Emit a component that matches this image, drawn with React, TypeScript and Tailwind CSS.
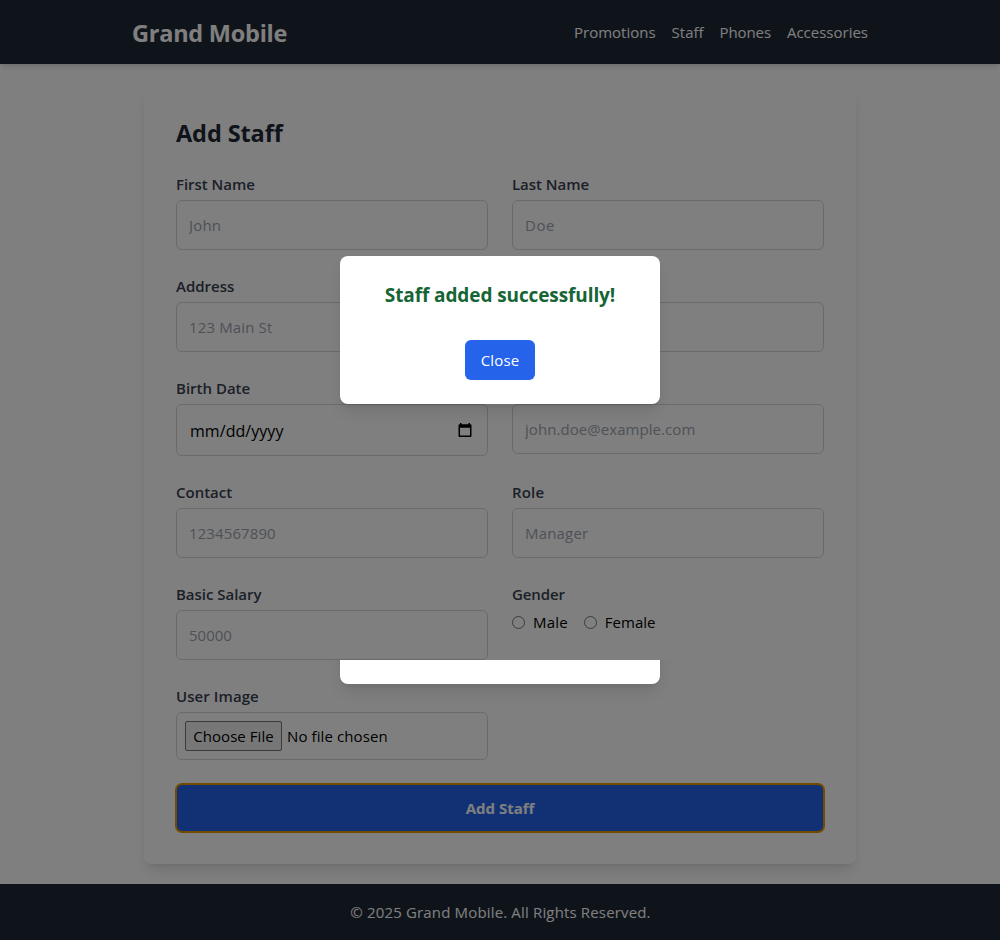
import type { ReactNode } from 'react';

type FieldProps = { label?: string; labelTracking?: string; children: ReactNode };

const control =
  'mt-1 block w-full rounded-md border border-[#d1d5db] bg-white text-[15px] leading-6 text-black';

function Field({ label, labelTracking = '', children }: FieldProps) {
  return (
    <div>
      <div className={`h-6 text-[15px] leading-6 font-semibold text-[#374151] ${labelTracking}`}>{label}</div>
      {children}
    </div>
  );
}

function TextInput({ placeholder, tracking = '', type = 'text' }: { placeholder?: string; tracking?: string; type?: string }) {
  return (
    <input
      type={type}
      placeholder={placeholder}
      className={`${control} h-[50px] p-3 placeholder:text-[#9ca3af] placeholder:opacity-100 ${tracking}`}
    />
  );
}

function DateInput() {
  return (
    <div className={`${control} flex h-[52px] items-center justify-between pr-[15px] pl-[13px]`}>
      <span className="pt-px text-base tracking-[0.05px]">mm/dd/yyyy</span>
      <svg width="14" height="15" viewBox="0 0 14 15" aria-hidden="true">
        <path
          fill="#000"
          fillRule="evenodd"
          d="M2 0h1.500v1.200h7V0H12v1.200h.5q1 0 1 1v10.800q0 1-1 1h-11q-1 0-1-1V2.200q0-1 1-1H2zM2 4.800v7.700h10V4.800z"
        />
      </svg>
    </div>
  );
}

function FileInput() {
  return (
    <div className={`${control} flex h-12 items-center px-2`}>
      <button className="h-[30px] w-[97px] rounded-[2px] border border-[#767676] bg-[#efefef] text-[15px] leading-6 tracking-[0.07px] whitespace-nowrap">
        Choose File
      </button>
      <span className="ml-[5px] tracking-[0.1px]">No file chosen</span>
    </div>
  );
}

function Radio({ label, tracking }: { label: string; tracking: string }) {
  return (
    <label className="flex h-6 items-center text-[15px] text-black">
      <input type="radio" name="gender" className="mr-2 size-[13px]" />
      <span className={tracking}>{label}</span>
    </label>
  );
}

function Header() {
  return (
    <header className="h-16 bg-[#1f2937] text-white shadow-[0_4px_6px_-1px_rgba(0,0,0,0.1),0_2px_4px_-2px_rgba(0,0,0,0.1)]">
      <div className="mx-auto flex h-16 w-[736px] items-center justify-between">
        <h1 className="pt-px text-[23.5px] leading-8 font-bold tracking-[-0.25px]">Grand Mobile</h1>
        <nav className="flex gap-4 text-[15px] leading-6">
          <a>Promotions</a>
          <a>Staff</a>
          <a className="tracking-[-0.12px]">Phones</a>
          <a>Accessories</a>
        </nav>
      </div>
    </header>
  );
}

function StaffForm() {
  return (
    <section className="mx-auto h-[780px] w-[712px] rounded-lg bg-white p-8 shadow-[0_10px_15px_-3px_rgba(0,0,0,0.1),0_4px_6px_-4px_rgba(0,0,0,0.1)]">
      <h2 className="mb-6 pt-[2px] text-[23.5px] leading-[30px] font-bold tracking-[-0.1px] text-[#1f2937]">Add Staff</h2>
      <div className="grid grid-cols-2 gap-6">
        <Field label="First Name" labelTracking="tracking-[-0.03px]">
          <TextInput placeholder="John" tracking="tracking-[0.2px]" />
        </Field>
        <Field label="Last Name" labelTracking="tracking-[-0.03px]">
          <TextInput placeholder="Doe" tracking="tracking-[0.5px]" />
        </Field>
        <Field label="Address">
          <TextInput placeholder="123 Main St" tracking="tracking-[0.14px]" />
        </Field>
        <Field>
          <TextInput />
        </Field>
        <Field label="Birth Date">
          <DateInput />
        </Field>
        <Field>
          <TextInput type="email" placeholder="john.doe@example.com" tracking="tracking-[0.06px]" />
        </Field>
        <Field label="Contact">
          <TextInput placeholder="1234567890" tracking="tracking-[0.1px]" />
        </Field>
        <Field label="Role" labelTracking="tracking-[0.19px]">
          <TextInput placeholder="Manager" tracking="tracking-[0.18px]" />
        </Field>
        <Field label="Basic Salary" labelTracking="tracking-[-0.02px]">
          <TextInput placeholder="50000" />
        </Field>
        <Field label="Gender" labelTracking="tracking-[-0.1px]">
          <div className="mt-1 flex gap-4">
            <Radio label="Male" tracking="tracking-[0.2px]" />
            <Radio label="Female" tracking="tracking-[0px]" />
          </div>
        </Field>
        <Field label="User Image" labelTracking="tracking-[0.08px]">
          <FileInput />
        </Field>
        <button className="col-span-2 h-12 rounded-md bg-[#2563eb] text-[15px] leading-6 font-bold text-white outline-2 -outline-offset-1 outline-[#e59700]">
          Add Staff
        </button>
      </div>
    </section>
  );
}

const dialogShadow = 'shadow-[0_10px_15px_-3px_rgba(0,0,0,0.1),0_4px_6px_-4px_rgba(0,0,0,0.1)]';

function SuccessDialog() {
  return (
    <div className="absolute inset-0 bg-black/50">
      <div className={`absolute top-64 left-[340px] h-[148px] w-80 rounded-lg bg-white p-6 text-center ${dialogShadow}`}>
        <h2 className="pt-[3px] text-[19px] leading-[25px] font-bold tracking-[-0.1px] text-[#166534]">
          Staff added successfully!
        </h2>
        <button className="mt-8 h-10 w-[70px] rounded-md bg-[#2563eb] text-[15px] leading-6 tracking-[0.15px] text-white">
          Close
        </button>
      </div>
      <div
        className={`absolute top-[536px] left-[340px] h-[148px] w-80 rounded-lg bg-white [clip-path:inset(124px_-40px_-40px_-40px)] ${dialogShadow}`}
      />
    </div>
  );
}

export default function App() {
  return (
    <div className="relative h-[940px] w-[1000px] overflow-hidden bg-white font-['Open_Sans','Noto_Sans',sans-serif]">
      <Header />
      <main className="h-[820px] pt-5">
        <StaffForm />
      </main>
      <footer className="relative flex h-14 items-center justify-center bg-[#1f2937] pl-px text-[15px] leading-6 tracking-[0.16px] text-white">
        © 2025 Grand Mobile. All Rights Reserved.
      </footer>
      <SuccessDialog />
    </div>
  );
}
